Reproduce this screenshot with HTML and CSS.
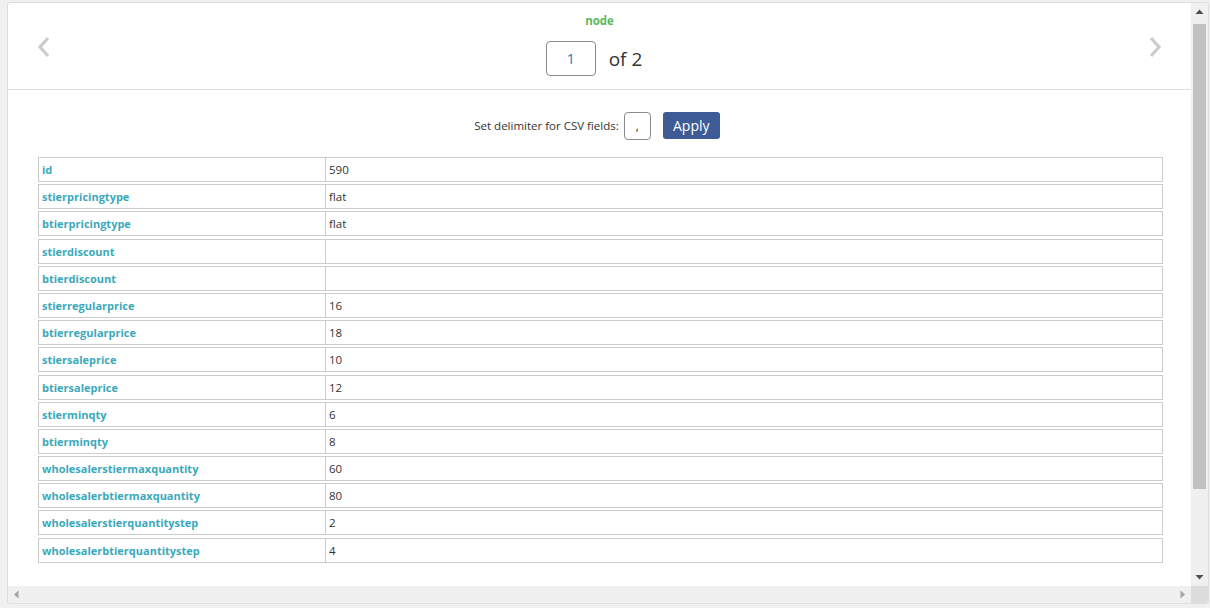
FILE: index.html
```html
<!DOCTYPE html>
<html>
<head>
<meta charset="utf-8">
<link rel="stylesheet" href="styles.css">
</head>
<body>
<div class="panel">
  <div class="main">
    <div class="content">
      <div class="header">
        <div class="title">node</div>
        <div class="pager">
          <svg class="chev" width="16" height="22" viewBox="0 0 16 22"><polyline points="12,2 4,11 12,20" fill="none" stroke="#cccccc" stroke-width="3.2"/></svg>
          <div class="pagebox">
            <div class="pageinput">1</div>
            <span class="of">of 2</span>
          </div>
          <svg class="chev" width="16" height="22" viewBox="0 0 16 22"><polyline points="4,2 12,11 4,20" fill="none" stroke="#cccccc" stroke-width="3.2"/></svg>
        </div>
      </div>
      <div class="delim">
        <span class="delim-label">Set delimiter for CSV fields:</span>
        <div class="delim-input">,</div>
        <button class="apply">Apply</button>
      </div>
      <div class="table">
        <div class="row"><div class="k">id</div><div class="v">590</div></div>
        <div class="row"><div class="k">stierpricingtype</div><div class="v">flat</div></div>
        <div class="row"><div class="k">btierpricingtype</div><div class="v">flat</div></div>
        <div class="row"><div class="k">stierdiscount</div><div class="v"></div></div>
        <div class="row"><div class="k">btierdiscount</div><div class="v"></div></div>
        <div class="row"><div class="k">stierregularprice</div><div class="v">16</div></div>
        <div class="row"><div class="k">btierregularprice</div><div class="v">18</div></div>
        <div class="row"><div class="k">stiersaleprice</div><div class="v">10</div></div>
        <div class="row"><div class="k">btiersaleprice</div><div class="v">12</div></div>
        <div class="row"><div class="k">stierminqty</div><div class="v">6</div></div>
        <div class="row"><div class="k">btierminqty</div><div class="v">8</div></div>
        <div class="row"><div class="k">wholesalerstiermaxquantity</div><div class="v">60</div></div>
        <div class="row"><div class="k">wholesalerbtiermaxquantity</div><div class="v">80</div></div>
        <div class="row"><div class="k">wholesalerstierquantitystep</div><div class="v">2</div></div>
        <div class="row"><div class="k">wholesalerbtierquantitystep</div><div class="v">4</div></div>
      </div>
    </div>
  </div>
  <div class="vbar">
    <svg class="arrow" width="17" height="17" viewBox="0 0 17 17"><polygon points="4.5,11 12.5,11 8.5,6.5" fill="#505050"/></svg>
    <div class="vtrack"><div class="vthumb"></div></div>
    <svg class="arrow" width="17" height="17" viewBox="0 0 17 17"><polygon points="4.5,6 12.5,6 8.5,10.5" fill="#505050"/></svg>
  </div>
  <div class="hbar">
    <svg class="arrow" width="17" height="17" viewBox="0 0 17 17"><polygon points="10.5,4.5 10.5,12.5 6,8.5" fill="#a3a3a3"/></svg>
    <svg class="arrow" width="17" height="17" viewBox="0 0 17 17"><polygon points="6.5,4.5 6.5,12.5 11,8.5" fill="#a3a3a3"/></svg>
  </div>
  <div class="corner"></div>
</div>
</body>
</html>
```

FILE: styles.css
```css
html, body {
  margin: 0;
  height: 100%;
}
body {
  background: #f0f0f0;
  padding: 2px 1px 0 7px;
  box-sizing: border-box;
  font-family: "Open Sans", "Noto Sans", sans-serif;
  color: #333;
}
.panel {
  height: 602px;
  border: 1px solid #dddddd;
  border-radius: 3px;
  background: #fff;
  overflow: hidden;
  box-sizing: border-box;
  display: grid;
  grid-template-columns: 1fr 17px;
  grid-template-rows: 1fr 17px;
}
.main {
  overflow: hidden;
  min-width: 0;
  min-height: 0;
}
.vbar {
  background: #f0f0f0;
  display: flex;
  flex-direction: column;
}
.vtrack {
  flex: 1;
  padding: 4px 2px 80px 2px;
  display: flex;
}
.vthumb {
  flex: 1;
  background: #c1c1c1;
}
.arrow {
  display: block;
  flex: none;
}
.hbar {
  background: #f0f0f0;
  display: flex;
  justify-content: space-between;
}
.corner {
  background: #dcdcdc;
}
.header {
  height: 86px;
  border-bottom: 1px solid #dddddd;
  display: flex;
  flex-direction: column;
}
.title {
  text-align: center;
  color: #5cb85c;
  font-weight: 700;
  font-size: 11.5px;
  line-height: 16px;
  margin-top: 10px;
}
.pager {
  display: flex;
  justify-content: space-between;
  align-items: flex-start;
  padding: 0 28px;
  margin-top: 12px;
}
.chev {
  display: block;
  margin-top: -5px;
}
.pagebox {
  display: flex;
  align-items: center;
  gap: 13px;
}
.pageinput {
  width: 48px;
  height: 33px;
  border: 1px solid #8a8a8a;
  border-radius: 4px;
  color: #2a7fc0;
  font-size: 15px;
  line-height: 33px;
  text-align: center;
}
.of {
  font-size: 19px;
  color: #333;
  margin-right: 11px;
}
.delim {
  display: flex;
  justify-content: center;
  align-items: center;
  padding-top: 21px;
  padding-right: 5px;
  height: 29px;
  margin-bottom: 17px;
}
.delim-label {
  font-size: 11.5px;
  color: #333;
  margin-right: 5px;
}
.delim-input {
  width: 25px;
  height: 26px;
  border: 1px solid #8a8a8a;
  border-radius: 4px;
  font-size: 12px;
  line-height: 26px;
  text-align: center;
  margin-right: 12px;
}
.apply {
  width: 57px;
  height: 27px;
  background: #3e5b95;
  color: #fff;
  border: none;
  border-radius: 3px;
  font-family: "Open Sans", "Noto Sans", sans-serif;
  font-size: 14px;
  padding: 0;
}
.table {
  margin: 0 28px 0 30px;
}
.row {
  display: grid;
  grid-template-columns: 287px 1fr;
  border: 1px solid #cccccc;
  margin-bottom: 2.2px;
  height: 25px;
  box-sizing: border-box;
}
.k {
  border-right: 1px solid #cccccc;
  color: #3aa9bb;
  font-weight: 700;
  font-size: 11px;
  line-height: 23px;
  padding-left: 3px;
}
.v {
  font-size: 11.5px;
  line-height: 23px;
  padding-left: 3px;
  color: #333;
}
```
